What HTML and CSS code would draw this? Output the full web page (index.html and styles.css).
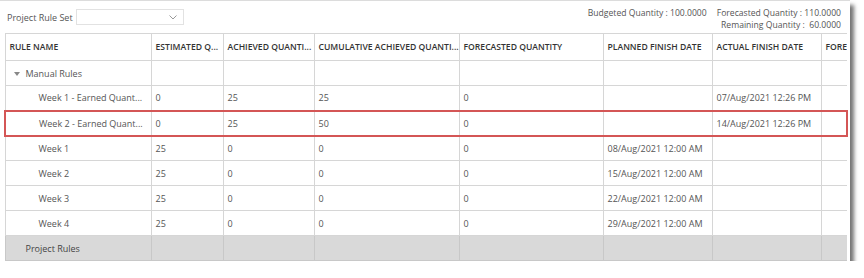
FILE: index.html
```html
<!DOCTYPE html>
<html>
<head>
<meta charset="utf-8">
<link rel="stylesheet" href="styles.css">
</head>
<body>
<div class="frame">
  <div class="toolbar">
    <div class="ruleset">
      <span class="label">Project Rule Set</span>
      <div class="select">
        <svg class="chev" width="8" height="5" viewBox="0 0 8 5"><path d="M0.5 0.5 L4 4 L7.5 0.5" fill="none" stroke="#999" stroke-width="1"/></svg>
      </div>
    </div>
    <div class="stats">
      <div class="stat-col">
        <span>Budgeted Quantity : 100.0000</span>
      </div>
      <div class="stat-col right">
        <span>Forecasted Quantity : 110.0000</span>
        <span>Remaining Quantity :&nbsp; 60.0000</span>
      </div>
    </div>
  </div>
  <table class="grid">
    <colgroup>
      <col style="width:146px"><col style="width:72px"><col style="width:91px"><col style="width:145px"><col style="width:144px"><col style="width:109px"><col style="width:109px"><col>
    </colgroup>
    <thead>
      <tr>
        <th>RULE NAME</th><th>ESTIMATED Q...</th><th>ACHIEVED QUANTI...</th><th>CUMULATIVE ACHIEVED QUANTI...</th><th>FORECASTED QUANTITY</th><th>PLANNED FINISH DATE</th><th>ACTUAL FINISH DATE</th><th class="clip">FORE</th>
      </tr>
    </thead>
    <tbody>
      <tr>
        <td class="group"><span class="caret"></span>Manual Rules</td><td></td><td></td><td></td><td></td><td></td><td></td><td></td>
      </tr>
      <tr>
        <td class="child">Week 1 - Earned Quant...</td><td>0</td><td>25</td><td>25</td><td>0</td><td></td><td>07/Aug/2021 12:26 PM</td><td></td>
      </tr>
      <tr class="hl">
        <td class="child">Week 2 - Earned Quant...</td><td>0</td><td>25</td><td>50</td><td>0</td><td></td><td>14/Aug/2021 12:26 PM</td><td class="last"></td>
      </tr>
      <tr>
        <td class="child">Week 1</td><td>25</td><td>0</td><td>0</td><td>0</td><td>08/Aug/2021 12:00 AM</td><td></td><td></td>
      </tr>
      <tr>
        <td class="child">Week 2</td><td>25</td><td>0</td><td>0</td><td>0</td><td>15/Aug/2021 12:00 AM</td><td></td><td></td>
      </tr>
      <tr>
        <td class="child">Week 3</td><td>25</td><td>0</td><td>0</td><td>0</td><td>22/Aug/2021 12:00 AM</td><td></td><td></td>
      </tr>
      <tr>
        <td class="child">Week 4</td><td>25</td><td>0</td><td>0</td><td>0</td><td>29/Aug/2021 12:00 AM</td><td></td><td></td>
      </tr>
      <tr class="project">
        <td class="pgroup">Project Rules</td><td></td><td></td><td></td><td></td><td></td><td></td><td></td>
      </tr>
    </tbody>
  </table>
</div>
</body>
</html>
```
FILE: styles.css
```css
html, body {
  margin: 0;
  padding: 0;
  background: #ffffff;
}
body {
  font-family: "Open Sans", "DejaVu Sans", sans-serif;
  color: #555;
}
.frame {
  width: 850px;
  height: 261px;
  background: #fff;
  border-top: 1px solid #dcdcdc;
  box-sizing: border-box;
  box-shadow: 4px 5px 4px rgba(0, 0, 0, 0.55);
}
.toolbar {
  height: 32px;
  display: flex;
  justify-content: space-between;
  align-items: flex-start;
  box-sizing: border-box;
}
.ruleset {
  display: flex;
  align-items: center;
  padding-left: 7px;
  padding-top: 8px;
}
.label {
  font-size: 9px;
  color: #555;
}
.select {
  margin-left: 3px;
  width: 108px;
  height: 16px;
  border: 1px solid #e2e2e2;
  box-sizing: border-box;
  display: flex;
  align-items: center;
  justify-content: flex-end;
  padding-right: 6px;
}
.stats {
  display: flex;
  gap: 10px;
  padding-right: 9px;
  padding-top: 6px;
  font-size: 8.6px;
  color: #555;
}
.stat-col {
  display: flex;
  flex-direction: column;
  line-height: 12px;
}
.stat-col.right {
  align-items: flex-end;
}
.grid {
  margin-left: 4px;
  width: 844px;
  border-collapse: collapse;
  table-layout: fixed;
  font-size: 9px;
}
.grid th, .grid td {
  border: 1px solid #d6d6d6;
  text-align: left;
  white-space: nowrap;
  overflow: hidden;
  padding: 0 4px;
  box-sizing: border-box;
}
.grid th {
  height: 27px;
  font-weight: 600;
  color: #333;
  font-size: 8.6px;
  padding-left: 4px;
}
.grid th:last-child, .grid td:last-child {
  border-right: none;
}
.grid td {
  height: 25px;
  color: #555;
}
.grid td.group {
  padding-left: 8px;
}
.caret {
  display: inline-block;
  width: 0;
  height: 0;
  border-left: 3px solid transparent;
  border-right: 3px solid transparent;
  border-top: 4px solid #888;
  margin-right: 6px;
  vertical-align: 1px;
}
.grid td.child {
  padding-left: 33px;
}
.grid tr.hl td {
  border-top: 2px solid #d45656;
  border-bottom: 2px solid #d45656;
}
.grid tr.hl td:first-child {
  border-left: 2px solid #d45656;
}
.grid tr.hl td.last {
  border-right: 2px solid #d45656;
}
.grid tr.project td {
  background: #d9d9d9;
  border-color: #c8c8c8;
  height: 25px;
}
.grid td.pgroup {
  padding-left: 20px;
  color: #444;
}
```
